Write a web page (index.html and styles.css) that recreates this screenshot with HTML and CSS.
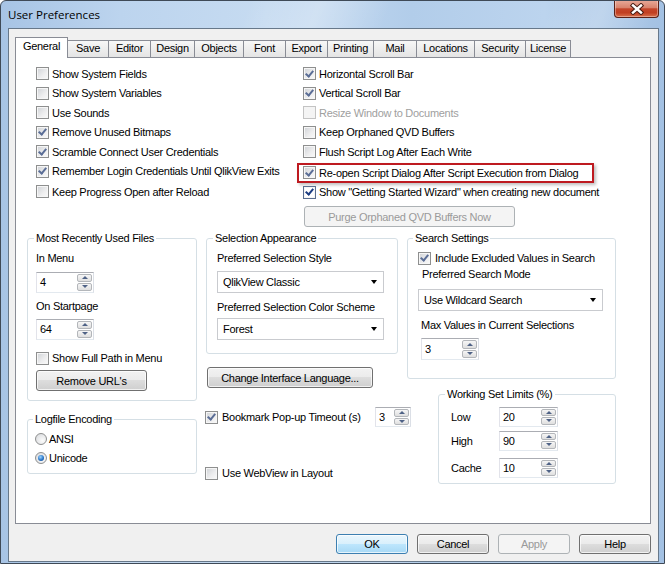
FILE: index.html
```html
<!DOCTYPE html>
<html lang="en">
<head>
  <meta charset="UTF-8">
  <title>User Preferences</title>
  <link rel="stylesheet" href="styles.css">
</head>
<body>
  <div id="window">
    <!-- Title bar -->
    <div id="titlebar">
      <span class="title">User Preferences</span>
      <div class="close-btn">
        <svg width="16" height="12" viewBox="0 0 16 12">
          <path d="M4 2.5 L12 9.5 M12 2.5 L4 9.5" stroke="#4a1d14" stroke-width="4.4" stroke-linecap="square"/>
          <path d="M4 2.5 L12 9.5 M12 2.5 L4 9.5" stroke="#fff" stroke-width="2.4" stroke-linecap="square"/>
        </svg>
      </div>
    </div>

    <div id="client">
      <!-- Tab headers -->
      <div id="tabs">
        <div class="tab active">General</div>
        <div class="tab">Save</div>
        <div class="tab">Editor</div>
        <div class="tab">Design</div>
        <div class="tab">Objects</div>
        <div class="tab">Font</div>
        <div class="tab">Export</div>
        <div class="tab">Printing</div>
        <div class="tab">Mail</div>
        <div class="tab">Locations</div>
        <div class="tab">Security</div>
        <div class="tab">License</div>
      </div>

      <!-- General tab page -->
      <div id="panel">
        <div class="options">
          <div class="opt-col opt-left">
            <div class="check"><span class="cb"></span>Show System Fields</div>
            <div class="check"><span class="cb"></span>Show System Variables</div>
            <div class="check"><span class="cb"></span>Use Sounds</div>
            <div class="check"><span class="cb on"></span>Remove Unused Bitmaps</div>
            <div class="check"><span class="cb on"></span>Scramble Connect User Credentials</div>
            <div class="check"><span class="cb on"></span>Remember Login Credentials Until QlikView Exits</div>
            <div class="check last"><span class="cb"></span>Keep Progress Open after Reload</div>
          </div>
          <div class="opt-col opt-right">
            <div class="check"><span class="cb on"></span>Horizontal Scroll Bar</div>
            <div class="check"><span class="cb on"></span>Vertical Scroll Bar</div>
            <div class="check disabled"><span class="cb"></span>Resize Window to Documents</div>
            <div class="check"><span class="cb"></span>Keep Orphaned QVD Buffers</div>
            <div class="check"><span class="cb"></span>Flush Script Log After Each Write</div>
            <div class="check highlight"><span class="cb on"></span>Re-open Script Dialog After Script Execution from Dialog</div>
            <div class="check"><span class="cb on focus"></span>Show "Getting Started Wizard" when creating new document</div>
            <button class="btn purge" disabled>Purge Orphaned QVD Buffers Now</button>
          </div>
        </div>

        <div class="lower">
          <!-- left column -->
          <div class="col col1">
            <fieldset class="group mru">
              <legend>Most Recently Used Files</legend>
              <div class="lbl">In Menu</div>
              <div class="spin mru-spin"><span class="val">4</span><span class="spin-btns"><span class="up"></span><span class="down"></span></span></div>
              <div class="lbl">On Startpage</div>
              <div class="spin mru-spin second"><span class="val">64</span><span class="spin-btns"><span class="up"></span><span class="down"></span></span></div>
              <div class="check small fullpath"><span class="cb"></span>Show Full Path in Menu</div>
              <button class="btn remove">Remove URL's</button>
            </fieldset>
            <fieldset class="group logfile">
              <legend>Logfile Encoding</legend>
              <div class="radio"><span class="rb"></span>ANSI</div>
              <div class="radio"><span class="rb on"></span>Unicode</div>
            </fieldset>
          </div>

          <!-- middle column -->
          <div class="col col2">
            <fieldset class="group selection">
              <legend>Selection Appearance</legend>
              <div class="lbl">Preferred Selection Style</div>
              <div class="combo">QlikView Classic</div>
              <div class="lbl">Preferred Selection Color Scheme</div>
              <div class="combo second">Forest</div>
            </fieldset>
            <button class="btn lang">Change Interface Language...</button>
            <div class="bookmark">
              <span class="cb on"></span><span class="text">Bookmark Pop-up Timeout (s)</span>
              <div class="spin small-spin"><span class="val">3</span><span class="spin-btns"><span class="up"></span><span class="down"></span></span></div>
            </div>
            <div class="check small webview"><span class="cb"></span>Use WebView in Layout</div>
          </div>

          <!-- right column -->
          <div class="col col3">
            <fieldset class="group search">
              <legend>Search Settings</legend>
              <div class="check small excl"><span class="cb on"></span>Include Excluded Values in Search</div>
              <div class="lbl mode">Preferred Search Mode</div>
              <div class="combo wide">Use Wildcard Search</div>
              <div class="lbl maxv">Max Values in Current Selections</div>
              <div class="spin max-spin"><span class="val">3</span><span class="spin-btns"><span class="up"></span><span class="down"></span></span></div>
            </fieldset>
            <fieldset class="group workset">
              <legend>Working Set Limits (%)</legend>
              <div class="ws-row"><span class="ws-lbl">Low</span><div class="spin ws-spin"><span class="val">20</span><span class="spin-btns"><span class="up"></span><span class="down"></span></span></div></div>
              <div class="ws-row high"><span class="ws-lbl">High</span><div class="spin ws-spin"><span class="val">90</span><span class="spin-btns"><span class="up"></span><span class="down"></span></span></div></div>
              <div class="ws-row cache"><span class="ws-lbl">Cache</span><div class="spin ws-spin"><span class="val">10</span><span class="spin-btns"><span class="up"></span><span class="down"></span></span></div></div>
            </fieldset>
          </div>
        </div>
      </div>

      <!-- Dialog buttons -->
      <div class="actions">
        <button class="btn default">OK</button>
        <button class="btn">Cancel</button>
        <button class="btn" disabled>Apply</button>
        <button class="btn">Help</button>
      </div>
    </div>
  </div>
</body>
</html>
```

FILE: styles.css
```css
body {
  margin: 0;
  font-family: "Liberation Sans", Arial, sans-serif;
  font-size: 11px;
  letter-spacing: -0.28px;
  color: #000;
  background: #fff;
}
/* Aero window frame */
#window {
  width: 665px;
  height: 564px;
  box-sizing: border-box;
  border: 1px solid #3f4a57;
  border-radius: 6px 6px 0 0;
  overflow: hidden;
  display: flex;
  flex-direction: column;
  background:
    linear-gradient(112deg, rgba(255,255,255,0) 28%, rgba(255,255,255,0.28) 36%, rgba(255,255,255,0) 44%, rgba(255,255,255,0) 62%, rgba(255,255,255,0.2) 68%, rgba(255,255,255,0) 74%),
    linear-gradient(to right, #a7c4e5, #bcd4ee 18%, #c6dbf1 40%, #b2cdea 62%, #bcd4ee 82%, #a3c1e3);
}
#titlebar {
  height: 27px;
  flex: none;
  display: flex;
  justify-content: space-between;
  align-items: flex-start;
}
.title {
  font-family: "Open Sans", "Liberation Sans", sans-serif;
  font-size: 11.5px;
  letter-spacing: 0;
  line-height: 28px;
  margin-left: 7px;
  color: #000;
}
.close-btn {
  width: 45px;
  height: 18px;
  margin: -1px 5px 0 0;
  box-sizing: border-box;
  border: 1px solid #5b2118;
  border-top: none;
  border-radius: 0 0 4px 4px;
  background: linear-gradient(#e9ab9b 0%, #d9836d 45%, #c4452a 52%, #c13f22 75%, #d9714d 100%);
  box-shadow: inset 0 0 0 1px rgba(255,255,255,0.35);
  display: flex;
  align-items: center;
  justify-content: center;
}
#client {
  flex: 1;
  margin: 0 5px 1px 7px;
  border: 1px solid #67788a;
  background: #f0f0f0;
  display: flex;
  flex-direction: column;
}
/* Tab header styling */
#tabs {
  display: grid;
  grid-template-columns: 52px 41px 42px 44px 49px 42px 42px 46px 43px 58px 51px 45px;
  align-items: end;
  height: 20px;
  margin: 8px 0 0 6px;
  position: relative;
  z-index: 1;
}
.tab {
  height: 17px;
  box-sizing: border-box;
  border: 1px solid #898c95;
  border-bottom: none;
  margin-right: -1px;
  line-height: 15px;
  text-align: center;
  background: linear-gradient(#f7f7f7, #e4e4e4);
  white-space: nowrap;
}
.tab.active {
  height: 21px;
  margin-bottom: -1px;
  line-height: 17px;
  background: #fff;
  position: relative;
  z-index: 2;
}
#panel {
  width: 636px;
  height: 467px;
  margin-left: 6px;
  box-sizing: border-box;
  border: 1px solid #898c95;
  background: #fff;
}
/* top check lists */
.options {
  display: flex;
  padding: 6px 0 0 20px;
}
.opt-left {
  width: 267px;
}
.check {
  display: flex;
  align-items: center;
  height: 19.5px;
  white-space: nowrap;
}
.check.small {
  height: 13px;
}
.check.disabled {
  color: #a0a0a0;
}
.opt-left .check.last {
  margin-top: 1px;
}
.highlight {
  width: 297px;
  margin: 1.5px 0 0 -6px;
  padding-left: 4px;
  box-sizing: border-box;
  border: 2px solid #be1a20;
  box-shadow: 2px 2px 3px rgba(0,0,0,0.25);
}
.cb {
  width: 13px;
  height: 13px;
  flex: none;
  box-sizing: border-box;
  border: 1px solid #8e8f8f;
  background: linear-gradient(135deg, #cfd2d6 0%, #eeeeef 60%, #fafafa 100%);
  box-shadow: inset 0 0 0 1px #f6f6f6;
  margin-right: 3px;
  display: flex;
  align-items: center;
  justify-content: center;
}
.cb.on::after {
  content: '';
  width: 3px;
  height: 6px;
  margin-top: -2px;
  border: solid #5a6d96;
  border-width: 0 2px 2px 0;
  transform: rotate(40deg);
}
.cb.focus {
  background: #fff;
  border-color: #5b6f8f;
}
.cb.focus::after {
  border-color: #1c3d82;
}
.check.disabled .cb {
  border-color: #c3c3c3;
  background: #f4f4f4;
  box-shadow: none;
}
/* buttons */
.btn {
  font: inherit;
  letter-spacing: inherit;
  color: #000;
  height: 21px;
  padding: 0;
  box-sizing: border-box;
  border: 1px solid #707070;
  border-radius: 3px;
  background: linear-gradient(#f2f2f2 0%, #ebebeb 49%, #dddddd 50%, #cfcfcf 100%);
  box-shadow: inset 0 0 0 1px rgba(255,255,255,0.7);
  cursor: default;
}
.btn:disabled {
  color: #9a9a9a;
  border-color: #adb2b5;
  background: #f4f4f4;
  box-shadow: none;
}
.btn.default {
  border-color: #3c7fb1;
  background: linear-gradient(#eaf6fd 0%, #d9f0fc 49%, #bee6fd 50%, #a7d9f5 100%);
}
.purge {
  width: 211px;
  margin: 4px 0 0 1px;
}
/* group boxes */
.lower {
  display: flex;
  gap: 9px;
  margin: 4.5px 0 0 11px;
}
.col {
  display: flex;
  flex-direction: column;
  align-items: flex-start;
}
.col1 { width: 170px; }
.col2 { width: 192px; }
.col3 { width: 209px; }
.group {
  margin: 0;
  min-width: 0;
  box-sizing: border-box;
  border: 1px solid #d5dfe5;
  border-radius: 3px;
  padding: 0 8px;
}
.group legend {
  padding: 0 2px;
  margin-left: -2px;
  line-height: 13px;
}
.lbl {
  line-height: 13px;
  margin-top: 7px;
  white-space: nowrap;
}
/* spin boxes */
.spin {
  display: flex;
  height: 21px;
  box-sizing: border-box;
  border: 1px solid;
  border-color: #abadb3 #dbdfe6 #e3e9ef #e2e3ea;
  background: #fff;
}
.spin .val {
  flex: 1;
  display: flex;
  align-items: center;
  padding-left: 3px;
}
.spin-btns {
  width: 15px;
  margin: 1px 1px 1px 0;
  display: flex;
  flex-direction: column;
  gap: 1px;
}
.spin-btns span {
  flex: 1;
  border: 1px solid #b3b6ba;
  border-radius: 2px;
  background: linear-gradient(#f6f6f6, #dfdfdf);
  display: flex;
  align-items: center;
  justify-content: center;
}
.spin-btns .up::before {
  content: '';
  border-left: 3px solid transparent;
  border-right: 3px solid transparent;
  border-bottom: 3px solid #4f6286;
}
.spin-btns .down::before {
  content: '';
  border-left: 3px solid transparent;
  border-right: 3px solid transparent;
  border-top: 3px solid #4f6286;
}
/* combo boxes */
.combo {
  height: 22px;
  box-sizing: border-box;
  border: 1px solid #c9cbcf;
  background: #fff;
  padding: 0 6px 0 5px;
  display: flex;
  align-items: center;
  justify-content: space-between;
  white-space: nowrap;
}
.combo::after {
  content: '';
  border-left: 3.5px solid transparent;
  border-right: 3.5px solid transparent;
  border-top: 4px solid #000;
}
/* Most recently used */
.mru {
  width: 170px;
  padding-bottom: 9px;
}
.mru-spin {
  width: 58px;
  margin-top: 7px;
}
.mru-spin.second {
  margin-top: 6px;
}
.fullpath {
  margin-top: 12px;
}
.remove {
  width: 111px;
  margin-top: 5.5px;
}
/* Logfile encoding */
.logfile {
  width: 170px;
  margin-top: 11.5px;
  padding: 0 7px 8.5px;
}
.radio {
  display: flex;
  align-items: center;
  height: 13px;
  margin-top: 6px;
}
.radio:first-of-type {
  margin-top: 7px;
}
.rb {
  width: 12px;
  height: 12px;
  flex: none;
  box-sizing: border-box;
  border: 1px solid #8e8f8f;
  border-radius: 50%;
  background: radial-gradient(circle at 65% 65%, #fbfbfb, #d6d8db);
  margin-right: 2px;
  display: flex;
  align-items: center;
  justify-content: center;
}
.rb.on::after {
  content: '';
  width: 6px;
  height: 6px;
  border-radius: 50%;
  background: radial-gradient(circle at 40% 35%, #9fd6ff, #2a76c8 55%, #0b3a80);
}
/* Selection appearance */
.selection {
  width: 192px;
  padding: 0 10px 13px;
}
.selection legend {
  margin-left: -4px;
}
.selection .combo {
  width: 167px;
  margin-top: 6.5px;
}
.selection .combo.second {
  margin-top: 4.5px;
}
.selection .lbl + .combo + .lbl {
  margin-top: 7.5px;
}
.lang {
  width: 166px;
  margin: 13px 0 0 1px;
}
.bookmark {
  display: flex;
  align-items: center;
  height: 20px;
  margin: 19px 0 0 -1px;
  white-space: nowrap;
}
.bookmark .cb {
  margin-right: 4px;
}
.bookmark .text {
  width: 153px;
}
.small-spin {
  width: 36px;
  height: 20px;
}
.webview {
  margin: 39.5px 0 0 -1px;
}
.webview .cb {
  margin-right: 4px;
}
/* Search settings */
.search {
  width: 209px;
  padding: 0 10px 18px;
}
.search legend {
  margin-left: -5px;
}
.excl {
  margin-top: 7px;
}
.excl .cb {
  margin-right: 4px;
}
.mode {
  margin: 3px 0 0 4px;
}
.combo.wide {
  width: 185px;
  margin-top: 8.5px;
}
.maxv {
  margin: 7.5px 0 0 3px;
}
.max-spin {
  width: 58px;
  height: 22px;
  margin: 6.5px 0 0 3px;
}
/* Working set limits */
.workset {
  width: 178px;
  margin: 8.5px 0 0 31px;
  padding: 0 0 5.5px 12px;
}
.workset legend {
  margin-left: -6px;
}
.ws-row {
  display: flex;
  align-items: center;
  margin-top: 6px;
}
.ws-row.high {
  margin-top: 4px;
}
.ws-row.cache {
  margin-top: 7px;
}
.ws-lbl {
  width: 48px;
}
.ws-spin {
  width: 59px;
  height: 20px;
}
/* dialog buttons */
.actions {
  display: flex;
  justify-content: flex-end;
  gap: 9px;
  margin-top: 10px;
  padding-right: 7px;
}
.actions .btn {
  width: 72px;
  height: 20px;
}
```
